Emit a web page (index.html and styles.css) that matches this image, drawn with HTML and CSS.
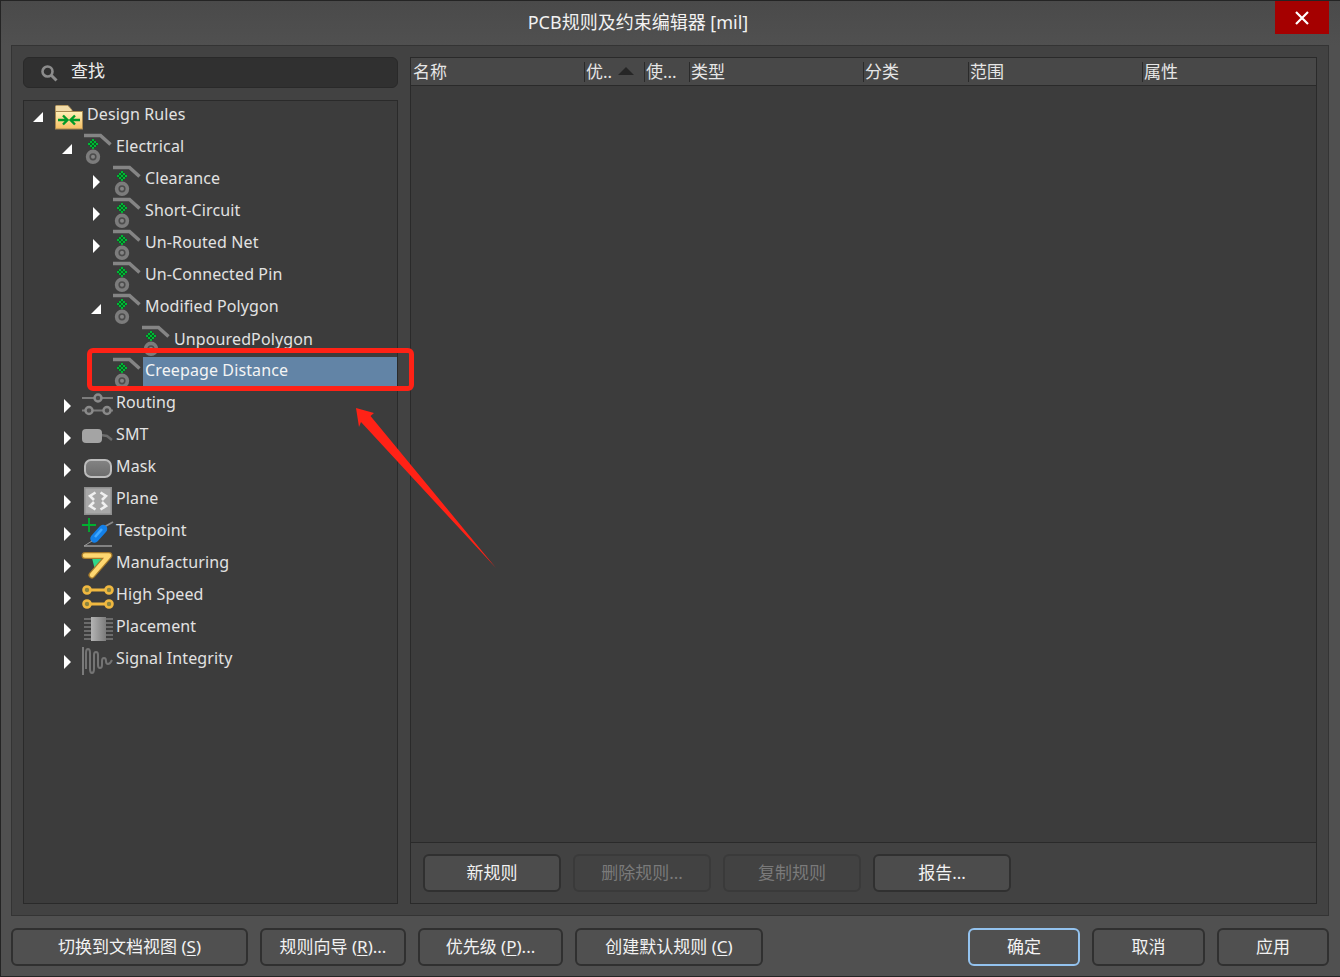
FILE: index.html
```html
<!DOCTYPE html>
<html lang="zh">
<head>
<meta charset="utf-8">
<title>PCB规则及约束编辑器 [mil]</title>
<link rel="stylesheet" href="styles.css">
</head>
<body>
<svg class="defs" width="0" height="0" aria-hidden="true">
  <symbol id="rule" viewBox="0 0 30 32" overflow="visible">
    <path d="M0 2.5H16.500L26.500 11.500" fill="none" stroke="#858585" stroke-width="3.500"/>
    <polygon points="9,5.500 14.500,11 9,16.500 3.500,11" fill="#0c5c24"/>
    <g fill="#00b834">
      <rect x="8" y="6" width="2" height="2"/><rect x="6" y="8" width="2" height="2"/><rect x="10" y="8" width="2" height="2"/>
      <rect x="4" y="10" width="2" height="2"/><rect x="8" y="10" width="2" height="2"/><rect x="12" y="10" width="2" height="2"/>
      <rect x="6" y="12" width="2" height="2"/><rect x="10" y="12" width="2" height="2"/><rect x="8" y="14" width="2" height="2"/>
    </g>
    <circle cx="9" cy="23.800" r="5.400" fill="#4c4c4c" stroke="#7c7c7c" stroke-width="3.600"/>
    <circle cx="9" cy="23.800" r="2" fill="#848484"/>
  </symbol>
</svg>

<div class="window">
  <header class="titlebar">
    <div class="title">PCB规则及约束编辑器 [mil]</div>
    <div class="close">
      <svg width="14" height="14" viewBox="0 0 14 14"><path d="M1 1L13 13M13 1L1 13" stroke="#fff" stroke-width="2.200"/></svg>
    </div>
  </header>

  <main class="panel">
    <section class="left">
      <div class="search">
        <svg class="search-icon" width="18" height="18" viewBox="0 0 18 18"><circle cx="7.500" cy="7.500" r="5" fill="none" stroke="#8c8c8c" stroke-width="2.600"/><path d="M11.500 11.500L16.500 16.500" stroke="#8c8c8c" stroke-width="3"/></svg>
        <span class="search-text">查找</span>
      </div>
      <nav class="tree">
        <div class="row l0"><i class="arrow open"></i>
          <svg class="icon" width="30" height="32" viewBox="0 0 30 32">
            <defs><linearGradient id="fold" x1="0" y1="0" x2="0" y2="1"><stop offset="0" stop-color="#fff0b8"/><stop offset="1" stop-color="#f6bf62"/></linearGradient></defs>
            <path d="M0.500 11V5.500Q0.500 4.500 1.500 4.500H13L17 9V11Z" fill="#f2dca8" stroke="#b89a62"/>
            <rect x="0.500" y="10.500" width="27" height="17.500" fill="url(#fold)" stroke="#a88850"/>
            <path d="M3 19H12M8 14.500L12.500 19L8 23.500M25 19H16M20 14.500L15.500 19L20 23.500" fill="none" stroke="#009a28" stroke-width="2.400"/>
          </svg>
          <span class="label">Design Rules</span></div>
        <div class="row l1"><i class="arrow open"></i><svg class="icon"><use href="#rule"/></svg><span class="label">Electrical</span></div>
        <div class="row l2"><i class="arrow"></i><svg class="icon"><use href="#rule"/></svg><span class="label">Clearance</span></div>
        <div class="row l2"><i class="arrow"></i><svg class="icon"><use href="#rule"/></svg><span class="label">Short-Circuit</span></div>
        <div class="row l2"><i class="arrow"></i><svg class="icon"><use href="#rule"/></svg><span class="label">Un-Routed Net</span></div>
        <div class="row l2"><i class="arrow none"></i><svg class="icon"><use href="#rule"/></svg><span class="label">Un-Connected Pin</span></div>
        <div class="row l2"><i class="arrow open"></i><svg class="icon"><use href="#rule"/></svg><span class="label">Modified Polygon</span></div>
        <div class="row l3"><i class="arrow none"></i><svg class="icon"><use href="#rule"/></svg><span class="label">UnpouredPolygon</span></div>
        <div class="row l2"><i class="arrow none"></i><svg class="icon"><use href="#rule"/></svg><span class="label selected">Creepage Distance</span></div>
        <div class="row l1"><i class="arrow"></i>
          <svg class="icon" width="30" height="32" viewBox="0 0 30 32">
            <path d="M-2 9H29M-2 21.500H29" stroke="#7c7c7c" stroke-width="2"/>
            <g fill="#4a4a4a" stroke="#8a8a8a" stroke-width="2.500"><circle cx="14" cy="9" r="3.500"/><circle cx="5" cy="21.500" r="3.500"/><circle cx="23" cy="21.500" r="3.500"/></g>
          </svg>
          <span class="label">Routing</span></div>
        <div class="row l1"><i class="arrow"></i>
          <svg class="icon" width="30" height="32" viewBox="0 0 30 32">
            <path d="M17 14L23 15L28 19" fill="none" stroke="#6c6c6c" stroke-width="2.500"/>
            <rect x="-2" y="8" width="20" height="14" rx="4" fill="#a4a4a4"/>
          </svg>
          <span class="label">SMT</span></div>
        <div class="row l1"><i class="arrow"></i>
          <svg class="icon" width="30" height="32" viewBox="0 0 30 32">
            <defs><linearGradient id="mask" x1="0" y1="0" x2="0" y2="1"><stop offset="0" stop-color="#848484"/><stop offset="1" stop-color="#6c6c6c"/></linearGradient></defs>
            <rect x="1" y="7" width="26" height="17" rx="6" fill="url(#mask)" stroke="#bcbcbc" stroke-width="2"/>
          </svg>
          <span class="label">Mask</span></div>
        <div class="row l1"><i class="arrow"></i>
          <svg class="icon" width="30" height="32" viewBox="0 0 30 32">
            <rect x="0" y="2" width="28" height="28" fill="#8e8e8e"/>
            <rect x="1.500" y="3.500" width="25" height="25" fill="#a8a8a8"/>
            <path d="M11.500 7.500L6 11L10 15M16.500 7.500L22 11L18 15M10 17L6 21L11.500 24.500M18 17L22 21L16.500 24.500" fill="none" stroke="#f0f0f0" stroke-width="2.600"/>
          </svg>
          <span class="label">Plane</span></div>
        <div class="row l1"><i class="arrow"></i>
          <svg class="icon" width="30" height="32" viewBox="0 0 30 32">
            <path d="M-2 8H12M5 1V15" stroke="#00b030" stroke-width="1.800"/>
            <path d="M20 10L29 5" stroke="#888" stroke-width="1.800"/>
            <path d="M10.500 21.500L19 12" stroke="#1480e8" stroke-width="8.500" stroke-linecap="round"/>
            <path d="M11 20L18 12" stroke="#40a8ff" stroke-width="2.500"/>
            <path d="M0 29H28" stroke="#c8c8c8" stroke-width="1"/><path d="M0 29L8 24" stroke="#999"/>
          </svg>
          <span class="label">Testpoint</span></div>
        <div class="row l1"><i class="arrow"></i>
          <svg class="icon" width="30" height="32" viewBox="0 0 30 32">
            <path d="M8 9H22L11 21Z" fill="#2ed88a"/>
            <path d="M1 6.500H25L8 26" fill="none" stroke="#a87c2c" stroke-width="7" stroke-linejoin="round" stroke-linecap="round"/>
            <path d="M1 6.500H25L8 26" fill="none" stroke="#ffd870" stroke-width="4.500" stroke-linejoin="round" stroke-linecap="round"/>
          </svg>
          <span class="label">Manufacturing</span></div>
        <div class="row l1"><i class="arrow"></i>
          <svg class="icon" width="30" height="32" viewBox="0 0 30 32">
            <path d="M3 9H25M3 23H25" stroke="#f0b840" stroke-width="3"/>
            <g fill="#8a8440" stroke="#f0b840" stroke-width="2.600"><circle cx="3" cy="9" r="3.500"/><circle cx="25" cy="9" r="3.500"/><circle cx="3" cy="23" r="3.500"/><circle cx="25" cy="23" r="3.500"/></g>
          </svg>
          <span class="label">High Speed</span></div>
        <div class="row l1"><i class="arrow"></i>
          <svg class="icon" width="30" height="32" viewBox="0 0 30 32">
            <defs><linearGradient id="chip" x1="0" y1="0" x2="1" y2="0"><stop offset="0" stop-color="#b4b4b4"/><stop offset="1" stop-color="#7c7c7c"/></linearGradient></defs>
            <path d="M0 6H29M0 10H29M0 14H29M0 18H29M0 22H29M0 26H29" stroke="#6c6c6c" stroke-width="2"/>
            <rect x="7" y="4" width="15" height="24" fill="url(#chip)"/>
          </svg>
          <span class="label">Placement</span></div>
        <div class="row l1"><i class="arrow"></i>
          <svg class="icon" width="30" height="32" viewBox="0 0 30 32">
            <path d="M-1 2V30" stroke="#7a7a7a" stroke-width="2"/>
            <path d="M2 24V8Q2 4 4 4T6 8V24Q6 28 8 28T10 24V10Q10 7 12 7T14 10V20Q14 23 16 23T18 20V16Q18 13 20 13T22 16Q22 19 24 19T28 15" fill="none" stroke="#747474" stroke-width="2"/>
          </svg>
          <span class="label">Signal Integrity</span></div>
      </nav>
    </section>

    <section class="right">
      <div class="thead">
        <div class="th c1">名称</div>
        <div class="th c2">优..<i class="sort"></i></div>
        <div class="th c3">使...</div>
        <div class="th c4">类型</div>
        <div class="th c5">分类</div>
        <div class="th c6">范围</div>
        <div class="th c7">属性</div>
      </div>
      <div class="tbody"></div>
      <div class="actions">
        <button class="btn act">新规则</button>
        <button class="btn act off">删除规则...</button>
        <button class="btn act off">复制规则</button>
        <button class="btn act">报告...</button>
      </div>
    </section>
  </main>

  <footer class="footer">
    <button class="btn w237">切换到文档视图 (<u>S</u>)</button>
    <button class="btn w146">规则向导 (<u>R</u>)...</button>
    <button class="btn w145">优先级 (<u>P</u>)...</button>
    <button class="btn w188">创建默认规则 (<u>C</u>)</button>
    <div class="spacer"></div>
    <button class="btn w112 primary">确定</button>
    <button class="btn w113">取消</button>
    <button class="btn w112">应用</button>
  </footer>

  <div class="callout"></div>
  <svg class="pointer" width="150" height="170" viewBox="350 402 150 170"><polygon points="356,408 374,413 370.500,416 496,568 361,422 359,427" fill="#ff2216"/></svg>
</div>
</body>
</html>
```
FILE: styles.css
```css
* { box-sizing: border-box; }
html, body { margin: 0; padding: 0; }
body {
  width: 1340px;
  height: 977px;
  overflow: hidden;
  background: #505050;
  color: #ececec;
  font-family: "Noto Sans", "Noto Sans CJK SC", sans-serif;
  font-size: 16px;
}
.defs { position: absolute; }
.window {
  position: relative;
  width: 1340px;
  height: 977px;
  display: flex;
  flex-direction: column;
  border: 1px solid #242424;
  border-right: 0;
  background: #505050;
}
.titlebar {
  height: 44px;
  flex: none;
  display: flex;
  align-items: flex-start;
  padding-right: 11px;
  background: linear-gradient(#4a4a4a, #505050);
}
.title {
  flex: 1;
  text-align: center;
  line-height: 42px;
  color: #f2f2f2;
  font-size: 18px;
}
.close {
  width: 54px;
  height: 33px;
  background: #a50000;
  display: flex;
  align-items: center;
  justify-content: center;
}
.panel {
  height: 871px;
  flex: none;
  margin: 0 11px 0 10px;
  padding: 11px;
  display: flex;
  gap: 12px;
  background: #424242;
  border: 1px solid #343434;
}
.left {
  width: 375px;
  flex: none;
  display: flex;
  flex-direction: column;
  gap: 12px;
}
.search {
  height: 31px;
  flex: none;
  display: flex;
  align-items: center;
  gap: 13px;
  padding-left: 16px;
  background: #303030;
  border: 1px solid #292929;
  border-radius: 6px;
  color: #ececec;
}
.search-icon { margin-top: 1px; }
.search-text {
  font-size: 17px;
  line-height: 24px;
  padding-bottom: 3px;
}
.tree {
  flex: 1;
  padding-left: 9px;
  background: #3c3c3c;
  border: 1px solid #2a2a2a;
}
.row {
  height: 32px;
  display: flex;
  align-items: flex-start;
}
.l1 { padding-left: 29px; }
.l2 { padding-left: 58px; }
.l3 { padding-left: 87px; }
.arrow {
  width: 22px;
  height: 32px;
  flex: none;
  position: relative;
}
.arrow::before {
  content: "";
  position: absolute;
  left: 2px;
  top: 10px;
  border-left: 7px solid #fff;
  border-top: 7px solid transparent;
  border-bottom: 7px solid transparent;
}
.arrow.open::before {
  left: 0;
  top: 11px;
  border: 0;
  border-right: 10px solid #fff;
  border-top: 10px solid transparent;
  border-bottom: 0;
}
.arrow.none::before { display: none; }
.icon {
  width: 30px;
  height: 32px;
  flex: none;
  overflow: visible;
}
.label {
  padding-left: 2px;
  line-height: 26px;
  letter-spacing: 0.12px;
  color: #e2e2e2;
  white-space: nowrap;
}
.l3 .label { line-height: 28px; }
.label.selected {
  flex: 1;
  height: 29px;
  line-height: 27px;
  background: #6284a6;
  color: #f4f4f4;
  position: relative;
}
.right {
  flex: 1;
  display: flex;
  flex-direction: column;
  background: #3c3c3c;
  border: 1px solid #2a2a2a;
}
.thead {
  height: 28px;
  flex: none;
  display: flex;
  background: #484848;
  border-bottom: 1px solid #2a2a2a;
}
.th {
  flex: none;
  height: 20px;
  margin-top: 4px;
  padding-left: 1px;
  font-size: 17px;
  line-height: 20px;
  border-left: 1px solid #2a2a2a;
  color: #e6e6e6;
  display: flex;
}
.c1 { width: 173px; padding-left: 2px; border-left: 0; }
.c2 { width: 60px; }
.c3 { width: 45px; }
.c4 { width: 174px; }
.c5 { width: 105px; }
.c6 { width: 174px; }
.c7 { flex: 1; }
.sort {
  margin: 5px 0 0 6px;
  border-left: 8px solid transparent;
  border-right: 8px solid transparent;
  border-bottom: 8px solid #262626;
  width: 0;
  height: 0;
}
.tbody { flex: 1; }
.actions {
  height: 61px;
  flex: none;
  display: flex;
  gap: 12px;
  padding: 11px 12px 0;
  background: #424242;
  border-top: 1px solid #2a2a2a;
}
.btn {
  height: 38px;
  padding: 0 0 1px;
  font: inherit;
  font-size: 17px;
  line-height: 30px;
  color: #f2f2f2;
  background: #505050;
  border: 2px solid #303030;
  border-radius: 6px;
  flex: none;
}
.btn u { text-underline-offset: 2px; }
.act { width: 138px; background: #4c4c4c; }
.off { color: #7a7a7a; background: #424242; border-color: #3a3a3a; }
.footer {
  flex: 1;
  display: flex;
  gap: 12px;
  padding: 12px 11px 0 10px;
}
.spacer { flex: 1; }
.w237 { width: 237px; }
.w146 { width: 146px; }
.w145 { width: 145px; }
.w188 { width: 188px; }
.w112 { width: 112px; }
.w113 { width: 113px; }
.primary { border-color: #93c2ee; }
.callout {
  position: absolute;
  left: 86px;
  top: 347px;
  width: 327px;
  height: 43px;
  border: 5px solid #ff2216;
  border-radius: 6px;
}
.pointer {
  position: absolute;
  left: 349px;
  top: 401px;
}
```
